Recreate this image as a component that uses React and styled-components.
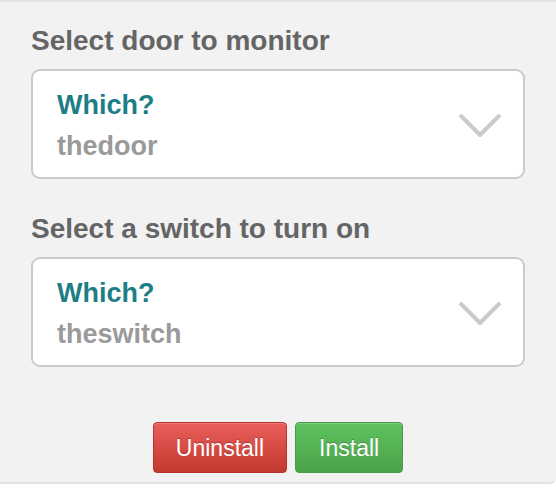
import React from 'react';
import styled, { createGlobalStyle } from 'styled-components';

const GlobalStyle = createGlobalStyle`
  html, body {
    margin: 0;
    padding: 0;
    background: #ffffff;
  }
  body {
    font-family: "Liberation Sans", Arial, Helvetica, sans-serif;
  }
`;

const Panel = styled.div`
  box-sizing: border-box;
  width: 556px;
  background: #f2f2f2;
  border-top: 2px solid #e2e2e2;
  border-bottom: 2px solid #e3e3e3;
  border-bottom-right-radius: 6px;
  padding: 23px 31px 9px;
`;

const Section = styled.section`
  display: flex;
  flex-direction: column;
  gap: 12px;
  margin-bottom: ${props => props.spacing || 0}px;
`;

const Label = styled.div`
  font-size: 28px;
  line-height: 32px;
  font-weight: 700;
  color: #656565;
`;

const Picker = styled.div`
  box-sizing: border-box;
  height: 110px;
  background: #ffffff;
  border: 2px solid #cbcbcb;
  border-radius: 9px;
  padding: 18px 21px 15px 24px;
  display: flex;
  align-items: center;
  justify-content: space-between;
`;

const PickerText = styled.div`
  display: flex;
  flex-direction: column;
  gap: 9px;
  align-self: flex-start;
`;

const Title = styled.div`
  font-size: 27px;
  line-height: 32px;
  font-weight: 700;
  color: #1e7e85;
`;

const Value = styled.div`
  font-size: 27px;
  line-height: 32px;
  font-weight: 700;
  color: #9a9a9a;
`;

const Actions = styled.div`
  display: flex;
  justify-content: center;
  gap: 8px;
`;

const Button = styled.button`
  box-sizing: border-box;
  height: 51px;
  padding: 1px ${props => props.pad}px 0;
  font-family: "Liberation Sans", Arial, Helvetica, sans-serif;
  font-size: 23px;
  color: #ffffff;
  text-shadow: 0 -1px 0 rgba(0, 0, 0, 0.25);
  border-radius: 4px;
  border: 1px solid ${props => props.edge};
  background: linear-gradient(to bottom, ${props => props.top}, ${props => props.bottom});
  box-shadow: inset 0 1px 0 rgba(255, 255, 255, 0.2);
  cursor: pointer;
`;

function Chevron () {
  return (
    <svg width='44' height='25' viewBox='0 0 44 25'>
      <polyline points='2,2 22,22 42,2' fill='none' stroke='#cacaca' strokeWidth='4' strokeLinejoin='round' />
    </svg>
  );
}

function DevicePicker ({ label, value, spacing }) {
  return (
    <Section spacing={spacing}>
      <Label>{label}</Label>
      <Picker>
        <PickerText>
          <Title>Which?</Title>
          <Value>{value}</Value>
        </PickerText>
        <Chevron />
      </Picker>
    </Section>
  );
}

export default function App () {
  return (
    <>
      <GlobalStyle />
      <Panel>
        <DevicePicker label='Select door to monitor' value='thedoor' spacing={34} />
        <DevicePicker label='Select a switch to turn on' value='theswitch' spacing={55} />
        <Actions>
          <Button pad={22} top='#ea5e5a' bottom='#c2392f' edge='#b5322d'>Uninstall</Button>
          <Button pad={23} top='#5fc25f' bottom='#4aa34a' edge='#479947'>Install</Button>
        </Actions>
      </Panel>
    </>
  );
}
